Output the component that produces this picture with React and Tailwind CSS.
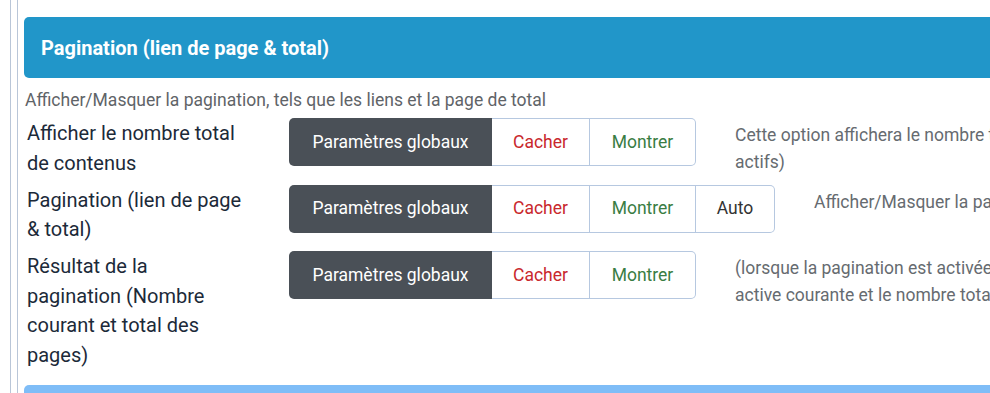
const rows = [
  {
    label: "Afficher le nombre total de contenus",
    options: ["Cacher", "Montrer"],
    help: ["Cette option affichera le nombre total de contenus (publiés et", "actifs)"],
  },
  {
    label: "Pagination (lien de page & total)",
    options: ["Cacher", "Montrer", "Auto"],
    help: ["Afficher/Masquer la pagination, tels que les liens et la page de total"],
  },
  {
    label: "Résultat de la pagination (Nombre courant et total des pages)",
    options: ["Cacher", "Montrer"],
    help: ["(lorsque la pagination est activée), afficher la page", "active courante et le nombre total de pages"],
  },
];

const optionStyle = {
  Cacher: "w-[98px] text-[#c9282d]",
  Montrer: "w-[106px] text-[#3a7d44]",
  Auto: "w-[79px] text-[#333333]",
};

function ButtonGroup({ options }) {
  return (
    <div className="flex h-12 shrink-0 text-[17.5px]">
      <div className="flex w-[203px] items-center justify-center rounded-l-[5px] bg-[#4a5057] text-white">
        Paramètres globaux
      </div>
      {options.map((o, i) => (
        <div
          key={o}
          className={`flex items-center justify-center border-y border-r border-[#b6c8e0] bg-white ${optionStyle[o]} ${
            i === options.length - 1 ? "rounded-r-[5px]" : ""
          }`}
        >
          {o}
        </div>
      ))}
    </div>
  );
}

export default function App() {
  return (
    <div className="h-[393px] w-[990px] overflow-hidden bg-white font-['Roboto',sans-serif]">
      <div className="ml-[10px] h-full border-l border-[#b9c6d8] pl-[6px]">
        <div className="h-full w-[1300px] border-l border-[#b9c6d8] pl-[6px] pt-[17px]">
          {/* Header */}
          <div className="flex h-[61px] items-center rounded-[5px] bg-[#2196c9] px-[17px]">
            <h2 className="text-[20px] font-bold text-white">Pagination (lien de page &amp; total)</h2>
          </div>
          <p className="mt-[11px] pl-px text-[17.5px] leading-[22px] text-[#5f6468]">
            Afficher/Masquer la pagination, tels que les liens et la page de total
          </p>

          {/* Rows */}
          <div className="mt-[7px] flex flex-col">
            {rows.map((r) => (
              <div key={r.label} className="mb-[6.5px] flex items-start">
                <div className="w-[265px] shrink-0 pl-[3px] pr-[46px] pt-px text-[20px] leading-[29.5px] text-[#1c2a39]">
                  {r.label}
                </div>
                <ButtonGroup options={r.options} />
                <div className="ml-[39px] whitespace-nowrap pt-[4px] text-[17.5px] leading-[27px] text-[#666b70]">
                  {r.help.map((h) => (
                    <div key={h}>{h}</div>
                  ))}
                </div>
              </div>
            ))}
          </div>

          {/* Next panel */}
          <div className="mt-[8px] h-10 rounded-[5px] bg-[#7fbdf7]" />
        </div>
      </div>
    </div>
  );
}
